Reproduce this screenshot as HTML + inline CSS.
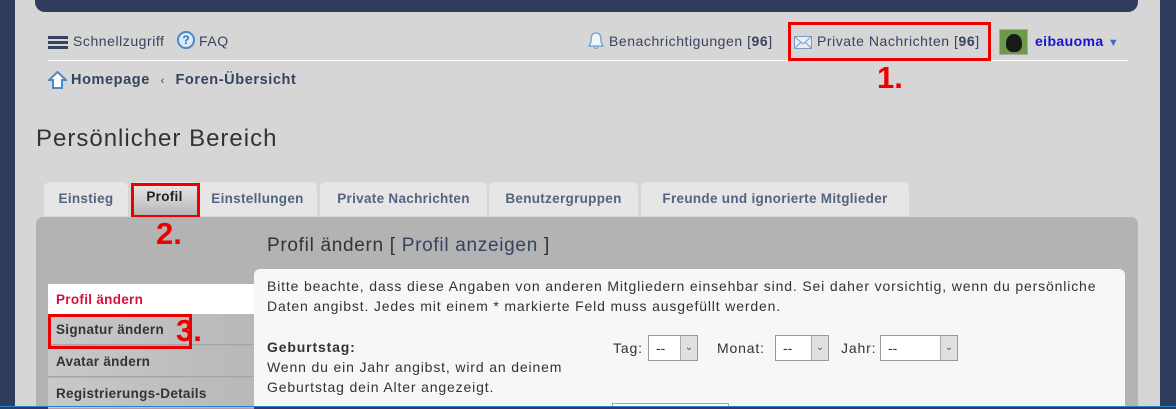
<!DOCTYPE html>
<html><head><meta charset="utf-8"><style>
*{margin:0;padding:0;box-sizing:border-box}
body{width:1176px;height:407px;overflow:hidden;background:#2f3d5e;font-family:"Liberation Sans",sans-serif;position:relative}
.abs{position:absolute}
#main{left:15px;top:0;width:1145px;height:407px;background:#d6d6d6}
#banner{left:35px;top:0;width:1103px;height:12px;background:#2f3d5e;border-radius:0 0 10px 10px}
.nav{font-size:14px;color:#36435f;top:33px;letter-spacing:0.55px}
.b{font-weight:bold}
.tab{top:182px;height:34px;background:#e6e6e6;border-radius:6px 6px 0 0;font-size:13.5px;font-weight:bold;color:#536482;text-align:center;line-height:34px;letter-spacing:0.3px}
.red{border:3px solid #e00;}
.num{color:#e00;font-weight:bold;font-size:31px;font-family:"Liberation Sans",sans-serif}
.menu{left:48px;width:206px;height:31px;font-size:13.5px;font-weight:bold;color:#333;padding-left:8px;line-height:31px;background:linear-gradient(90deg,#c8c8c8,#b8b8b8);border-bottom:1px solid #a5a5a5;letter-spacing:0.3px}
.sel{border:1px solid #999;background:#fff;height:26px}
.sel i{position:absolute;right:0;top:0;width:17px;height:24px;background:#e0e0e0;border-left:1px solid #aaa;font-style:normal;font-size:10px;text-align:center;line-height:24px;color:#555}
.sel span{position:absolute;left:7px;top:4px;font-size:14px;color:#333}
.t{font-size:14px;color:#333;letter-spacing:0.85px}
</style></head><body>
<div id="main" class="abs"></div>
<div id="banner" class="abs"></div>
<div class="abs" style="left:48px;top:60px;width:1080px;height:1px;background:#fff"></div>
<div class="abs" style="left:48px;top:36px;width:20px;height:3px;background:#36435f;box-shadow:0 5px 0 #36435f,0 10px 0 #36435f"></div>
<div class="abs nav" style="left:73px">Schnellzugriff</div>
<div class="abs" style="left:177px;top:31px;width:18px;height:18px;border:2px solid #4a8ac8;border-radius:50%;background:#d9ebfa;color:#3470b0;font-size:12px;font-weight:bold;text-align:center;line-height:14px">?</div>
<div class="abs nav" style="left:199px">FAQ</div>
<svg class="abs" style="left:587px;top:31px" width="18" height="20"><path d="M9 2 C4 2 4 7 4 11 L2 15 L16 15 L14 11 C14 7 14 2 9 2Z M7 16 Q9 19 11 16" fill="#eef5fb" stroke="#6a9ed0" stroke-width="1.3"/></svg>
<div class="abs nav" style="left:609px">Benachrichtigungen [<span class="b">96</span>]</div>
<svg class="abs" style="left:794px;top:36px" width="18" height="13"><rect x="0.5" y="0.5" width="17" height="12" fill="#e8eef5" stroke="#7a9bc0"/><path d="M1 1 L9 8 L17 1 M1 12 L7 6 M17 12 L11 6" fill="none" stroke="#7a9bc0"/></svg>
<div class="abs nav" style="left:817px">Private Nachrichten [<span class="b">96</span>]</div>
<div class="abs red" style="left:788px;top:22px;width:203px;height:39px"></div>
<div class="abs" style="left:999px;top:29px;width:29px;height:26px;background:#6a9a4a;border:1px solid #aaa"><div style="margin:4px 0 0 6px;width:16px;height:18px;background:#1a1a1a;border-radius:50% 50% 40% 40%"></div></div>
<div class="abs b" style="left:1035px;top:33px;font-size:14px;color:#1515d0;letter-spacing:0.4px">eibauoma <span style="color:#3a6ad8;font-size:11px">▼</span></div>
<div class="abs num" style="left:877px;top:60px">1.</div>
<svg class="abs" style="left:48px;top:71px" width="19" height="19"><path d="M9.5 1 L18 9 L14 9 L14 17 L5 17 L5 9 L1 9 Z" fill="#fff" stroke="#4a8ac8" stroke-width="2"/></svg>
<div class="abs b" style="left:71px;top:72px;font-size:14.5px;color:#36435f;letter-spacing:0.6px">Homepage <span style="font-size:11px;font-weight:normal;margin:0 6px">‹</span> Foren-Übersicht</div>
<div class="abs" style="left:36px;top:125px;font-size:24px;color:#333;letter-spacing:1px">Persönlicher Bereich</div>
<div class="abs tab" style="left:44px;width:84px">Einstieg</div>
<div class="abs tab" style="left:131px;width:67px;background:linear-gradient(#ececec,#b5b5b5);color:#222;line-height:30px">Profil</div>
<div class="abs tab" style="left:198px;width:119px">Einstellungen</div>
<div class="abs tab" style="left:320px;width:167px">Private Nachrichten</div>
<div class="abs tab" style="left:489px;width:149px">Benutzergruppen</div>
<div class="abs tab" style="left:641px;width:268px">Freunde und ignorierte Mitglieder</div>
<div class="abs red" style="left:131px;top:183px;width:69px;height:35px"></div>
<div class="abs" style="left:36px;top:217px;width:1102px;height:190px;background:#b3b3b3;border-radius:7px 7px 0 0"></div>
<div class="abs num" style="left:156px;top:216px">2.</div>
<div class="abs" style="left:267px;top:235px;font-size:19px;color:#333;letter-spacing:0.7px">Profil ändern [ <span style="color:#36435f">Profil anzeigen</span> ]</div>
<div class="abs" style="left:254px;top:269px;width:871px;height:138px;background:#f7f7f7;border-radius:6px 6px 0 0"></div>
<div class="abs menu" style="top:284px;background:#fff;color:#d31141;border:none;height:30px">Profil ändern</div>
<div class="abs menu" style="top:314px">Signatur ändern</div>
<div class="abs menu" style="top:346px">Avatar ändern</div>
<div class="abs menu" style="top:378px">Registrierungs-Details</div>
<div class="abs red" style="left:48px;top:314px;width:144px;height:35px"></div>
<div class="abs num" style="left:176px;top:313px">3.</div>
<div class="abs t" style="left:267px;top:276px;line-height:20px;width:850px">Bitte beachte, dass diese Angaben von anderen Mitgliedern einsehbar sind. Sei daher vorsichtig, wenn du persönliche Daten angibst. Jedes mit einem * markierte Feld muss ausgefüllt werden.</div>
<div class="abs t" style="left:267px;top:337px;line-height:20px"><b>Geburtstag:</b><br>Wenn du ein Jahr angibst, wird an deinem<br>Geburtstag dein Alter angezeigt.</div>
<div class="abs t" style="left:613px;top:340px">Tag:</div>
<div class="abs sel" style="left:648px;top:335px;width:50px"><span>--</span><i>⌄</i></div>
<div class="abs t" style="left:717px;top:340px">Monat:</div>
<div class="abs sel" style="left:775px;top:335px;width:54px"><span>--</span><i>⌄</i></div>
<div class="abs t" style="left:841px;top:340px">Jahr:</div>
<div class="abs sel" style="left:880px;top:335px;width:78px"><span>--</span><i>⌄</i></div>
<div class="abs" style="left:612px;top:403px;width:117px;height:4px;border:1px solid #aaa;border-bottom:none;background:#fff"></div>
<div class="abs" style="left:0;top:406px;width:1176px;height:1px;background:#2a7fd0"></div>
</body></html>
